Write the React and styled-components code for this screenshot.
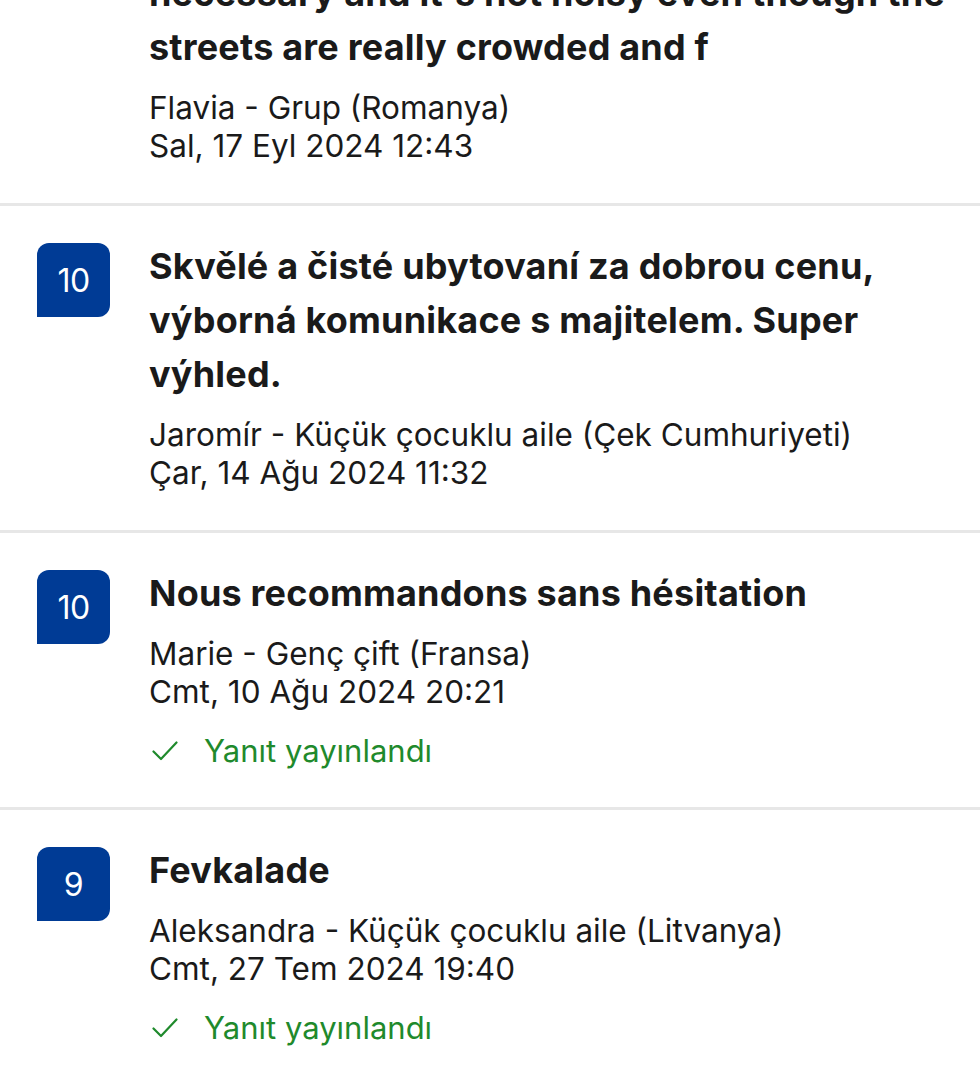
import React from 'react'
import styled, { createGlobalStyle } from 'styled-components'

const Global = createGlobalStyle`
    html, body {
        margin: 0;
        padding: 0;
        background: #ffffff;
    }
    body {
        font-family: Inter, "Noto Sans", "Liberation Sans", sans-serif;
        color: #1a1a1a;
        overflow: hidden;
    }
`;

const List = styled.div`
    margin-top: -67px;
`;

const Review = styled.div`
    display: flex;
    gap: 39px;
    padding: 33px 30px 38px 37px;
    border-bottom: 3px solid #e7e7e7;
`;

const Badge = styled.div`
    flex: 0 0 auto;
    width: 73px;
    height: 74px;
    margin-top: 4px;
    visibility: ${p => (p.$empty ? 'hidden' : 'visible')};
    background: #003b95;
    color: #ffffff;
    border-radius: 12px 12px 12px 0;
    display: flex;
    align-items: center;
    justify-content: center;
    font-size: 32px;
    letter-spacing: -0.5px;
`;

const Body = styled.div`
    flex: 1;
    min-width: 0;
`;

const Title = styled.div`
    font-size: 36px;
    font-weight: 700;
    line-height: 54px;
    letter-spacing: 0.2px;
    color: #1a1a1a;
`;

const Meta = styled.div`
    margin-top: 15px;
    font-size: 31.5px;
    line-height: 38px;
    color: #1a1a1a;
`;

const Reply = styled.div`
    display: flex;
    align-items: center;
    gap: 26px;
    margin-top: 22px;
    font-size: 31px;
    line-height: 36px;
    color: #1f8a2c;
    svg {
        margin-left: 3px;
    }
`;

const reviews = [
    {
        score: '',
        title: "necessary and it's not noisy even though the streets are really crowded and f",
        author: 'Flavia - Grup (Romanya)',
        date: 'Sal, 17 Eyl 2024 12:43',
        replied: false,
    },
    {
        score: '10',
        title: 'Skvělé a čisté ubytovaní za dobrou cenu, výborná komunikace s majitelem. Super výhled.',
        author: 'Jaromír - Küçük çocuklu aile (Çek Cumhuriyeti)',
        date: 'Çar, 14 Ağu 2024 11:32',
        replied: false,
    },
    {
        score: '10',
        title: 'Nous recommandons sans hésitation',
        author: 'Marie - Genç çift (Fransa)',
        date: 'Cmt, 10 Ağu 2024 20:21',
        replied: true,
    },
    {
        score: '9',
        title: 'Fevkalade',
        author: 'Aleksandra - Küçük çocuklu aile (Litvanya)',
        date: 'Cmt, 27 Tem 2024 19:40',
        replied: true,
    },
];

function Check() {
    return (
        <svg width="26" height="22" viewBox="0 0 26 22" fill="none">
            <path d="M1.5 11.5 L9 19 L24.5 2.5" stroke="#1f8a2c" strokeWidth="2.2" strokeLinecap="round" strokeLinejoin="round"/>
        </svg>
    )
}

export default function App() {
    return (
        <>
            <Global/>
            <List>
                {reviews.map((r, i) => (
                    <Review key={i}>
                        <Badge $empty={r.score === ''}>{r.score}</Badge>
                        <Body>
                            <Title>{r.title}</Title>
                            <Meta>
                                <div>{r.author}</div>
                                <div>{r.date}</div>
                            </Meta>
                            {r.replied && (
                                <Reply>
                                    <Check/>
                                    <span>Yanıt yayınlandı</span>
                                </Reply>
                            )}
                        </Body>
                    </Review>
                ))}
            </List>
        </>
    )
}
